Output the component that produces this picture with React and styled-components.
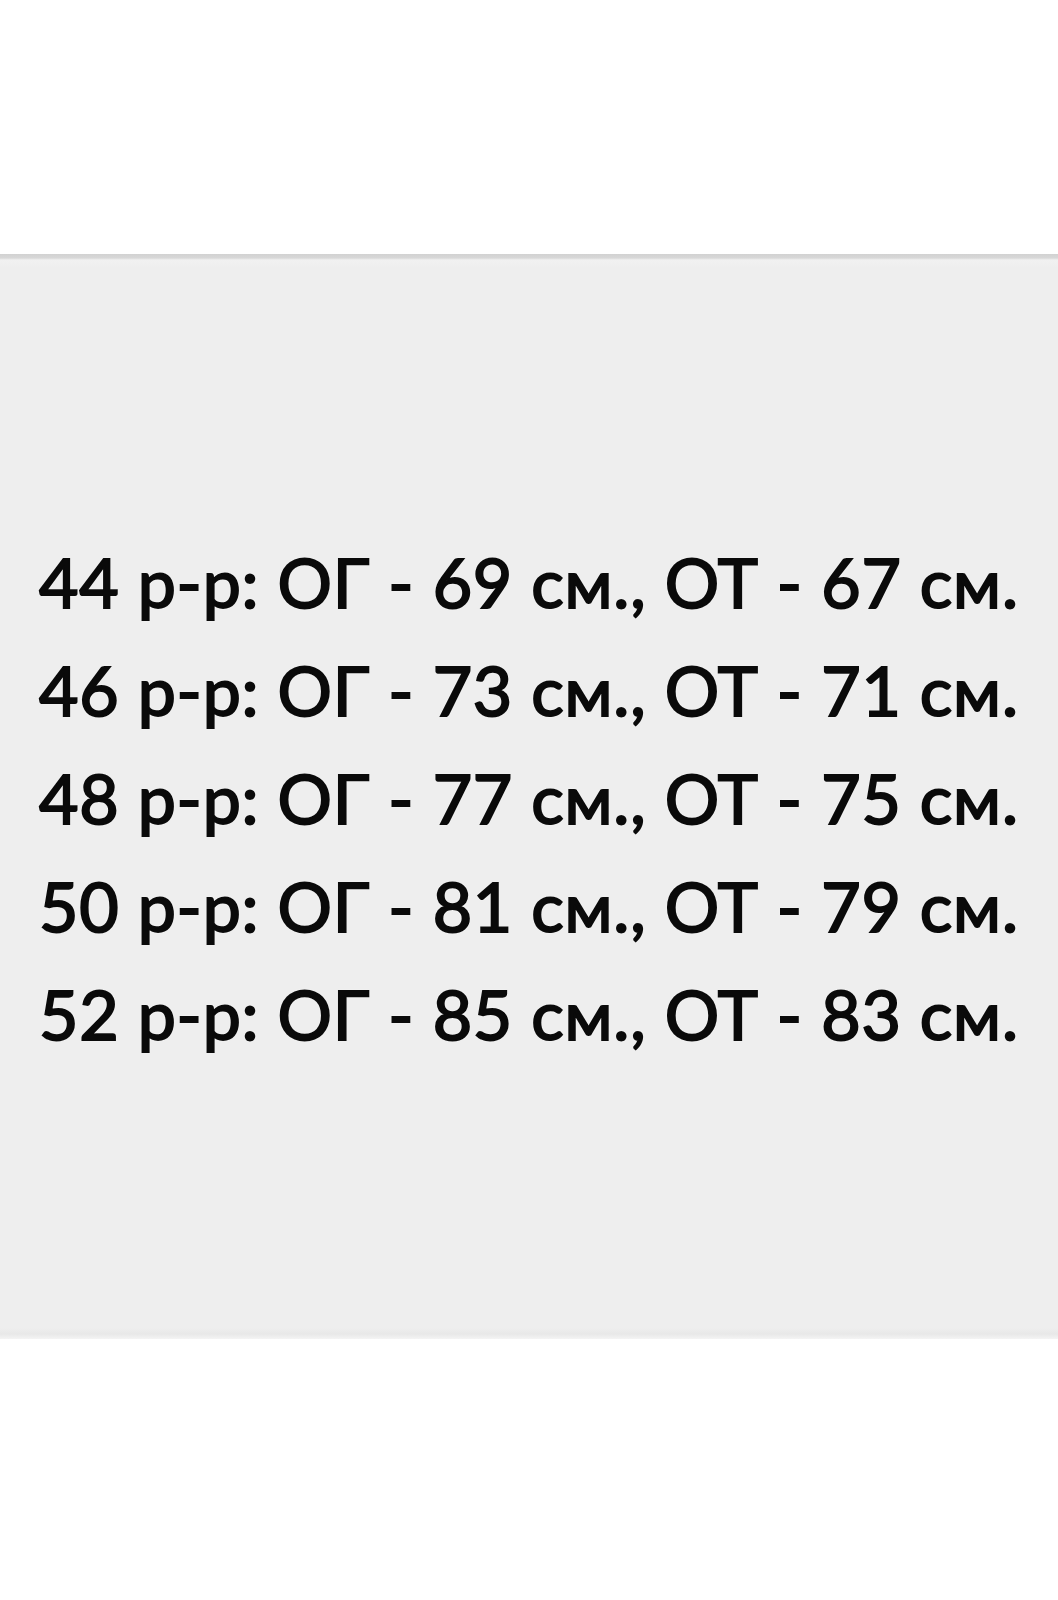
import { createGlobalStyle, styled } from "styled-components";

const GlobalStyle = createGlobalStyle`
  html, body {
    margin: 0;
    padding: 0;
    background: #ffffff;
  }
`;

const Page = styled.div`
  display: flex;
  flex-direction: column;
  width: 1058px;
  height: 1600px;
  background: #ffffff;
`;

const Spacer = styled.div`
  height: ${({ size }) => size}px;
  flex-shrink: 0;
`;

const Panel = styled.section`
  box-sizing: border-box;
  height: 1085px;
  padding: 274px 0 0 39px;
  background: linear-gradient(
    to bottom,
    #d2d2d2 0px,
    #d8d8d8 4px,
    #f1f1f1 6px,
    #eeeeee 14px,
    #eeeeee 1074px,
    #e8e8e8 1080px,
    #f4f4f4 1085px
  );
`;

const SizeList = styled.ul`
  list-style: none;
  margin: 0;
  padding: 0;
`;

const SizeRow = styled.li`
  font-family: Lato, "Open Sans", sans-serif;
  font-size: 68px;
  line-height: 108px;
  font-weight: 400;
  color: #0a0a0a;
  white-space: nowrap;
  letter-spacing: 0.8px;
  -webkit-text-stroke: 2px #0a0a0a;
  text-shadow: 0 0 2px #ffffff, 0 0 2px #ffffff, 0 0 3px #ffffff;
`;

const sizes = [
  { size: 44, chest: 69, waist: 67 },
  { size: 46, chest: 73, waist: 71 },
  { size: 48, chest: 77, waist: 75 },
  { size: 50, chest: 81, waist: 79 },
  { size: 52, chest: 85, waist: 83 },
];

export default function App() {
  return (
    <Page>
      <GlobalStyle />
      <Spacer size={254} />
      <Panel>
        <SizeList>
          {sizes.map((row) => (
            <SizeRow key={row.size}>
              {row.size} р-р: ОГ - {row.chest} см., ОТ - {row.waist} см.
            </SizeRow>
          ))}
        </SizeList>
      </Panel>
    </Page>
  );
}
